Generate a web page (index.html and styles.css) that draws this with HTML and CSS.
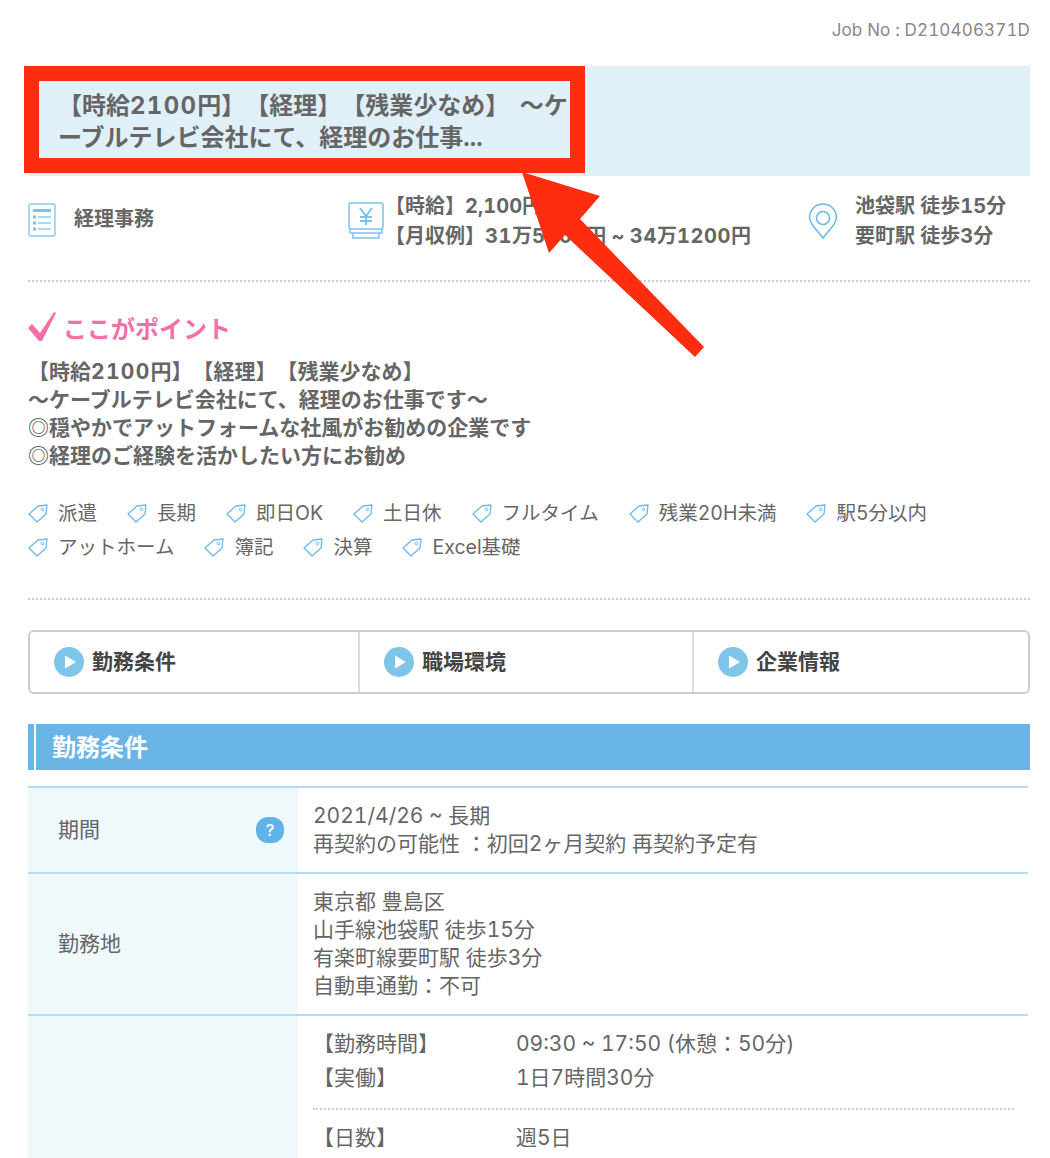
FILE: index.html
```html
<!DOCTYPE html>
<html lang="ja">
<head>
<meta charset="utf-8">
<title>Job D210406371D</title>
<link rel="stylesheet" href="styles.css">
</head>
<body>
<div class="page">
  <p class="jobno">Job No : D210406371D</p>
  <h1 class="title"><span class="title-text">【時給<span class="num">2100</span>円】【経理】【残業少なめ】 ～ケ<br>ーブルテレビ会社にて、経理のお仕事...</span></h1>

  <div class="info">
    <div class="info-item">
      <svg class="ic-doc" viewBox="0 0 28 34" fill="none"><rect x="1" y="1" width="26" height="32" rx="2" stroke="#8ccbee" stroke-width="1.5"/><rect x="5" y="6" width="18" height="3" fill="#7cc2ea"/><path d="M5 14h3M5 20h3M5 26h3" stroke="#7cc2ea" stroke-width="3"/><path d="M10 14h13M10 20h13M10 26h13" stroke="#8ccbee" stroke-width="1.3"/></svg>
      <span class="info-text info-single">経理事務</span>
    </div>
    <div class="info-item">
      <svg class="ic-yen" viewBox="0 0 36 37" fill="none"><rect x="1" y="1" width="34" height="26" rx="2" stroke="#7cc2ea" stroke-width="1.5"/><path d="M2 27v4h32v-4" stroke="#7cc2ea" stroke-width="1.5"/><path d="M5 31v5h26v-5" stroke="#7cc2ea" stroke-width="1.5"/><path d="M12 6l6 8 6-8M18 14v9M12 15h12M12 19h12" stroke="#7cc2ea" stroke-width="2"/></svg>
      <span class="info-text">【時給】2,100円<br>【月収例】<span class="num-sm">31</span>万<span class="num-sm">5000</span>円 ~ <span class="num-sm">34</span>万<span class="num-sm">1200</span>円</span>
    </div>
    <div class="info-item">
      <svg class="ic-pin" viewBox="0 0 30 36" fill="none"><path d="M15 35C9 27 1.500 21 1.500 14.500a13.500 13.500 0 0 1 27 0C28.500 21 21 27 15 35Z" stroke="#6cb8e6" stroke-width="1.5"/><circle cx="15" cy="15" r="6.500" stroke="#6cb8e6" stroke-width="1.500"/></svg>
      <span class="info-text">池袋駅 徒歩15分<br>要町駅 徒歩3分</span>
    </div>
  </div>

  <section class="point">
    <h2 class="point-head">
      <svg class="ic-check" viewBox="0 0 28 30"><path d="M0 16L4 12L12 21L26 0L28 1L14 29L11 29Z" fill="#f26fa7"/></svg>
      <span>ここがポイント</span>
    </h2>
    <p class="point-body">【時給<span class="num">2100</span>円】【経理】【残業少なめ】<br>～ケーブルテレビ会社にて、経理のお仕事です～<br>◎穏やかでアットフォームな社風がお勧めの企業です<br>◎経理のご経験を活かしたい方にお勧め</p>
    <ul class="tags">
      <li class="tag"><svg class="ic-tag" viewBox="0 0 20 20" fill="none"><path d="M1 11L10 3L19 2L18 11L9 19Z" stroke="#6cb8e6" stroke-width="1.300" stroke-linejoin="round"/><circle cx="14.500" cy="6.500" r="1.300" stroke="#6cb8e6"/></svg>派遣</li>
      <li class="tag"><svg class="ic-tag" viewBox="0 0 20 20" fill="none"><path d="M1 11L10 3L19 2L18 11L9 19Z" stroke="#6cb8e6" stroke-width="1.300" stroke-linejoin="round"/><circle cx="14.500" cy="6.500" r="1.300" stroke="#6cb8e6"/></svg>長期</li>
      <li class="tag"><svg class="ic-tag" viewBox="0 0 20 20" fill="none"><path d="M1 11L10 3L19 2L18 11L9 19Z" stroke="#6cb8e6" stroke-width="1.300" stroke-linejoin="round"/><circle cx="14.500" cy="6.500" r="1.300" stroke="#6cb8e6"/></svg>即日OK</li>
      <li class="tag"><svg class="ic-tag" viewBox="0 0 20 20" fill="none"><path d="M1 11L10 3L19 2L18 11L9 19Z" stroke="#6cb8e6" stroke-width="1.300" stroke-linejoin="round"/><circle cx="14.500" cy="6.500" r="1.300" stroke="#6cb8e6"/></svg>土日休</li>
      <li class="tag"><svg class="ic-tag" viewBox="0 0 20 20" fill="none"><path d="M1 11L10 3L19 2L18 11L9 19Z" stroke="#6cb8e6" stroke-width="1.300" stroke-linejoin="round"/><circle cx="14.500" cy="6.500" r="1.300" stroke="#6cb8e6"/></svg>フルタイム</li>
      <li class="tag"><svg class="ic-tag" viewBox="0 0 20 20" fill="none"><path d="M1 11L10 3L19 2L18 11L9 19Z" stroke="#6cb8e6" stroke-width="1.300" stroke-linejoin="round"/><circle cx="14.500" cy="6.500" r="1.300" stroke="#6cb8e6"/></svg>残業20H未満</li>
      <li class="tag"><svg class="ic-tag" viewBox="0 0 20 20" fill="none"><path d="M1 11L10 3L19 2L18 11L9 19Z" stroke="#6cb8e6" stroke-width="1.300" stroke-linejoin="round"/><circle cx="14.500" cy="6.500" r="1.300" stroke="#6cb8e6"/></svg>駅5分以内</li>
      <li class="tag"><svg class="ic-tag" viewBox="0 0 20 20" fill="none"><path d="M1 11L10 3L19 2L18 11L9 19Z" stroke="#6cb8e6" stroke-width="1.300" stroke-linejoin="round"/><circle cx="14.500" cy="6.500" r="1.300" stroke="#6cb8e6"/></svg>アットホーム</li>
      <li class="tag"><svg class="ic-tag" viewBox="0 0 20 20" fill="none"><path d="M1 11L10 3L19 2L18 11L9 19Z" stroke="#6cb8e6" stroke-width="1.300" stroke-linejoin="round"/><circle cx="14.500" cy="6.500" r="1.300" stroke="#6cb8e6"/></svg>簿記</li>
      <li class="tag"><svg class="ic-tag" viewBox="0 0 20 20" fill="none"><path d="M1 11L10 3L19 2L18 11L9 19Z" stroke="#6cb8e6" stroke-width="1.300" stroke-linejoin="round"/><circle cx="14.500" cy="6.500" r="1.300" stroke="#6cb8e6"/></svg>決算</li>
      <li class="tag"><svg class="ic-tag" viewBox="0 0 20 20" fill="none"><path d="M1 11L10 3L19 2L18 11L9 19Z" stroke="#6cb8e6" stroke-width="1.300" stroke-linejoin="round"/><circle cx="14.500" cy="6.500" r="1.300" stroke="#6cb8e6"/></svg>Excel基礎</li>
    </ul>
  </section>

  <nav class="tabs">
    <a class="tab"><svg class="ic-play" viewBox="0 0 30 30"><circle cx="15" cy="15" r="15" fill="#7fc5ea"/><path d="M11 8.500L22 15L11 21.500Z" fill="#fff"/></svg><span class="tab-text">勤務条件</span></a>
    <a class="tab"><svg class="ic-play" viewBox="0 0 30 30"><circle cx="15" cy="15" r="15" fill="#7fc5ea"/><path d="M11 8.500L22 15L11 21.500Z" fill="#fff"/></svg><span class="tab-text">職場環境</span></a>
    <a class="tab"><svg class="ic-play" viewBox="0 0 30 30"><circle cx="15" cy="15" r="15" fill="#7fc5ea"/><path d="M11 8.500L22 15L11 21.500Z" fill="#fff"/></svg><span class="tab-text">企業情報</span></a>
  </nav>

  <h2 class="section-head"><span class="section-title">勤務条件</span></h2>

  <div class="spec">
    <div class="spec-row spec-row-1">
      <div class="spec-label"><span class="label-text">期間</span><span class="help">?</span></div>
      <div class="spec-value">2021/4/26 ~ 長期<br>再契約の可能性 ：初回2ヶ月契約 再契約予定有</div>
    </div>
    <div class="spec-row spec-row-2">
      <div class="spec-label"><span class="label-text">勤務地</span></div>
      <div class="spec-value">東京都 豊島区<br>山手線池袋駅 徒歩15分<br>有楽町線要町駅 徒歩3分<br>自動車通勤：不可</div>
    </div>
    <div class="spec-row">
      <div class="spec-label"></div>
      <div class="spec-value spec-value-inner">
        <dl class="hours">
          <dt>【勤務時間】</dt><dd>09:30 ~ 17:50 (休憩：50分)</dd>
          <dt>【実働】</dt><dd>1日7時間30分</dd>
        </dl>
        <dl class="hours hours-next">
          <dt>【日数】</dt><dd>週5日</dd>
        </dl>
      </div>
    </div>
  </div>

  <div class="red-frame"></div>
  <svg class="red-arrow" viewBox="0 0 200 200"><path d="M2 2L80 26L60 49L184 177L175 187L45 65L29 83Z" fill="#ff2d10"/></svg>
</div>
</body>
</html>
```

FILE: styles.css
```css
* { box-sizing: border-box; }
html, body { margin: 0; padding: 0; background: #fff; }
.page {
  position: relative;
  width: 1050px;
  height: 1158px;
  overflow: hidden;
  padding: 0 20px 0 28px;
  font-family: "Inter", "Noto Sans CJK JP", sans-serif;
  font-variant-numeric: tabular-nums;
  color: #666;
  font-size: 21px;
  text-spacing-trim: space-all;
}
.num { letter-spacing: 1.300px; }
.num-sm { letter-spacing: 0.600px; }
.jobno {
  margin: 0;
  height: 66px;
  padding-top: 18px;
  font-size: 17px;
  line-height: 24px;
  letter-spacing: 0.150px;
  text-align: right;
  color: #888;
}
.title {
  margin: 0;
  height: 110px;
  padding: 24px 0 0 30px;
  background: #dff0f9;
  font-size: 24px;
  line-height: 32px;
  font-weight: 700;
  color: #666;
  white-space: nowrap;
  word-spacing: 4px;
}
.info {
  display: grid;
  grid-template-columns: 320px 460px 1fr;
  height: 106px;
  padding-top: 15px;
  border-bottom: 2px dotted #ccc;
}
.info-item { display: flex; align-items: flex-start; }
.info-text { font-weight: 700; font-size: 20px; line-height: 30px; }
.info-single { padding-top: 13px; margin-left: 18px; }
.ic-doc { width: 28px; height: 34px; margin-top: 12px; flex: none; }
.ic-yen { width: 36px; height: 37px; margin: 11px 1px 0 0; flex: none; }
.ic-pin { width: 30px; height: 36px; margin: 12px 17px 0 0; flex: none; }

.point { height: 318px; padding-top: 27px; border-bottom: 2px dotted #ccc; }
.point-head {
  display: flex;
  align-items: center;
  gap: 7px;
  margin: 0;
  height: 36px;
  color: #f26fa7;
  font-size: 24px;
  font-weight: 700;
}
.ic-check { width: 28px; height: 30px; flex: none; }
.point-body {
  margin: 13px 0 0;
  font-size: 21px;
  line-height: 28px;
  font-weight: 700;
}
.tags {
  display: flex;
  flex-wrap: wrap;
  list-style: none;
  margin: 26px 0 0;
  padding: 0;
  column-gap: 30px;
}
.tag { display: flex; align-items: center; gap: 10px; height: 34px; line-height: 34px; font-size: 19.500px; }
.ic-tag { width: 20px; height: 20px; flex: none; }

.tabs {
  display: grid;
  grid-template-columns: 328px 334px 1fr;
  margin-top: 30px;
  height: 64px;
  border: 2px solid #ccc;
  border-radius: 6px;
}
.tab {
  display: flex;
  align-items: center;
  gap: 8px;
  padding-left: 24px;
  font-size: 21px;
  font-weight: 700;
  color: #444;
  border-left: 2px solid #ddd;
}
.tab:first-child { border-left: 0; }
.tab-text { margin-top: -4px; }
.ic-play { width: 30px; height: 30px; flex: none; }

.section-head {
  margin: 30px 0 0;
  height: 46px;
  border-left: 6px solid #69b5e5;
  background: #fff;
  padding-left: 2px;
}
.section-title {
  display: block;
  height: 46px;
  padding-left: 16px;
  background: #69b5e5;
  color: #fff;
  font-size: 24px;
  line-height: 47px;
  font-weight: 700;
}

.spec { margin-top: 16px; width: 1000px; }
.spec-row {
  display: grid;
  grid-template-columns: 270px 1fr;
  border-top: 2px solid #b0dcf5;
}
.spec-row-1 { height: 86px; }
.spec-row-2 { height: 142px; }
.spec-label {
  display: flex;
  align-items: center;
  justify-content: space-between;
  padding: 0 14px 0 30px;
  background: #eff8fb;
}
.label-text { margin-top: -4px; }
.spec-value { padding: 14px 15px; font-size: 21px; line-height: 28px; }
.spec-value-inner { padding: 11px 14px 0 15px; }
.help {
  display: block;
  width: 28px;
  height: 26px;
  border-radius: 12px;
  background: #5fb3e8;
  color: #fff;
  font-size: 16px;
  line-height: 26px;
  text-align: center;
  font-weight: 500;
}
.hours {
  display: grid;
  grid-template-columns: 203px 1fr;
  margin: 0;
  line-height: 34px;
  padding-bottom: 13px;
}
.hours dt, .hours dd { margin: 0; }
.hours-next { border-top: 2px dotted #ccc; padding-top: 11px; }

.red-frame {
  position: absolute;
  left: 24px;
  top: 66px;
  width: 561px;
  height: 107px;
  border: 15px solid #ff2d10;
}
.red-arrow {
  position: absolute;
  left: 520px;
  top: 170px;
  width: 200px;
  height: 200px;
}
```
